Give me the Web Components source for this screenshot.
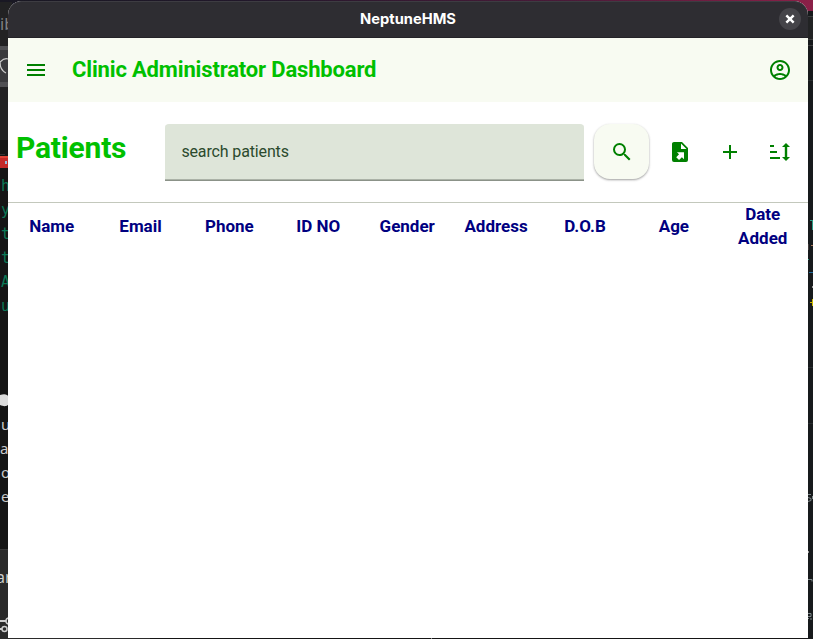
<!DOCTYPE html>
<html lang="en">
<head>
<meta charset="utf-8">
<title>NeptuneHMS</title>
<style>
html,body{margin:0;width:813px;height:639px;overflow:hidden;background:#151515}
</style>
</head>
<body>
<hms-desktop>
  <hms-window heading="NeptuneHMS">
    <hms-appbar>Clinic Administrator Dashboard</hms-appbar>
    <hms-toolbar heading="Patients" placeholder="search patients"></hms-toolbar>
    <hms-table>
      <hms-th>Name</hms-th><hms-th>Email</hms-th><hms-th>Phone</hms-th><hms-th>ID NO</hms-th><hms-th>Gender</hms-th><hms-th>Address</hms-th><hms-th>D.O.B</hms-th><hms-th>Age</hms-th><hms-th>Date Added</hms-th>
    </hms-table>
  </hms-window>
</hms-desktop>
<script>
const define = (name, html) => customElements.define(name, class extends HTMLElement {
  constructor() {
    super();
    const t = document.createElement('template');
    t.innerHTML = html;
    this.attachShadow({mode: 'open'}).append(t.content.cloneNode(true));
    this.shadowRoot.querySelectorAll('[data-attr]').forEach(e => e.textContent = this.getAttribute(e.dataset.attr));
  }
});

const icons = {
  menu: '<path d="M3 18h18v-2H3v2zm0-5h18v-2H3v2zm0-7v2h18V6H3z"/>',
  account: '<path d="M12 2C6.48 2 2 6.48 2 12s4.48 10 10 10 10-4.48 10-10S17.52 2 12 2zM7.35 18.5C8.66 17.56 10.26 17 12 17s3.34.56 4.65 1.5C15.34 19.44 13.74 20 12 20s-3.34-.56-4.65-1.5zm10.79-1.38C16.45 15.8 14.32 15 12 15s-4.45.8-6.14 2.12C4.7 15.73 4 13.95 4 12c0-4.42 3.58-8 8-8s8 3.58 8 8c0 1.95-.7 3.73-1.86 5.12zM12 6c-1.93 0-3.5 1.57-3.5 3.5S10.07 13 12 13s3.5-1.57 3.5-3.5S13.93 6 12 6zm0 5c-.83 0-1.5-.67-1.5-1.5S11.17 8 12 8s1.5.67 1.5 1.5S12.83 11 12 11z"/>',
  search: '<path d="M15.5 14h-.79l-.28-.27A6.471 6.471 0 0 0 16 9.5 6.5 6.5 0 1 0 9.5 16c1.61 0 3.09-.59 4.23-1.57l.27.28v.79l5 4.99L20.49 19l-4.99-5zm-6 0C7.01 14 5 11.99 5 9.5S7.01 5 9.5 5 14 7.01 14 9.5 11.99 14 9.5 14z"/>',
  exportfile: '<path fill-rule="evenodd" d="M6 2C4.89 2 4 2.9 4 4v16a2 2 0 0 0 2 2h12a2 2 0 0 0 2-2V8l-6-6H6zM13 3.5 18.5 9H13V3.5zM8.93 12.22H16v7.07l-2.12-2.12L11.05 20 8.22 17.17l2.83-2.83-2.12-2.12z"/>',
  plus: '<path d="M19 13h-6v6h-2v-6H5v-2h6V5h2v6h6v2z"/>',
  sort: '<path d="M19.200 7h2.800l-4-4-4 4h2.800v10h-2.800l4 4 4-4h-2.800V7M2 17h10v2H2v-2M6 5v2H2V5h4m-4 6h7v2H2v-2z"/>',
  close: '<path d="M6.500 6.500l11 11M17.500 6.500l-11 11" stroke="#fff" stroke-width="3.6" fill="none"/>'
};
customElements.define('hms-icon', class extends HTMLElement {
  constructor() {
    super();
    this.attachShadow({mode: 'open'}).innerHTML = `<style>:host{display:block;width:24px;height:24px;color:#008000}svg{display:block;width:100%;height:100%}</style><svg viewBox="0 0 24 24" fill="currentColor">${icons[this.getAttribute('name')]}</svg>`;
  }
});

define('hms-desktop', `<style>
:host{display:block;position:relative;width:813px;height:639px;overflow:hidden;background:#151515}
svg{position:absolute;inset:0}
span{position:absolute;line-height:24px;white-space:pre;font-family:"Noto Sans",sans-serif;font-size:16px;color:#ccc}
.g{font-family:"DejaVu Sans Mono",monospace;font-size:15px;color:#0a7957}
.w{font-size:15px;color:#c9c9c9}
slot{display:block;position:absolute;left:8px;top:1px}
</style>
<svg width="813" height="639">
 <defs><linearGradient id="a"><stop offset="0" stop-color="#191823"/><stop offset=".3" stop-color="#21172a"/><stop offset=".7" stop-color="#4b1a39"/><stop offset="1" stop-color="#8b2048"/></linearGradient></defs>
 <rect width="813" height="12" fill="url(#a)"/>
 <path fill="#222223" d="M0 2h12v44H0zM0 86h8v54H0z"/><path fill="#505053" d="M0 46h8v41H0z"/><path fill="#3a3a3d" d="M0 50h8v32H0z"/>
 <path d="M8 59c-3-1-5 0-8 3 0 6 2 9 6 11" fill="none" stroke="#ccc" stroke-width="1.2"/>
 <path fill="#c52a29" d="M0 156h8v12H0z"/><path fill="#e04437" d="M0 156h8v2H0z"/><path fill="#9bd" d="M5 161h2v3H5z"/>
 <path fill="#333" d="M0 154h5v1H0z"/>
 <path fill="#ddd" d="M0 395c5-2 8 0 8 1v9c-3 2-5 1-8 0z"/>
 <path fill="#2a2a2a" d="M0 549h8v90H0z"/><path fill="#383838" d="M0 549h8v1H0z"/>
 <path d="M0 621h6M0 629h2" stroke="#ccc" stroke-width="2"/><circle cx="9" cy="621" r="3" fill="none" stroke="#ccc" stroke-width="1.5"/><circle cx="4.500" cy="629" r="2.500" fill="none" stroke="#ccc" stroke-width="1.500"/>
 <path fill="#2b2b2b" d="M0 638h150v1H0z"/><path fill="#888" d="M431 638h1v1h-1z"/>
 <path fill="#171a1c" d="M808 11h5v628h-5z"/><path fill="#222324" d="M808 16h5v24h-5z"/>
 <path fill="#3c3d3e" d="M808 16h5v1h-5zM808 39h5v1h-5zM808 45h5v1h-5z"/><path fill="#292d2f" d="M808 80h5v1h-5zM808 367h5v1h-5zM808 423h5v1h-5z"/>
 <path fill="#2c9b86" d="M810 220h3v1h-3zM812 221h1v9h-1zM808 259h1v1h-1z"/><path fill="#236d9d" d="M809 272h4v1h-4z"/>
 <path fill="#aa7658" d="M811 245h2v1h-2z"/><path fill="#403a39" d="M808 244h1v6h-1z"/><path fill="#999" d="M812 286h1v2h-1zM808 551h1v2h-1z"/>
 <path fill="#cab800" d="M810 302h3v1h-3zM812 299h1v7h-1z"/>
 <path fill="none" stroke="#7f898b" d="M811 494.500h-3M808 497.500l3 1v2l-3 1M812.500 496v3M808 579.500h4v2M808 613.500h3v3h-3M811 620v-2M808 618.500h1"/>
</svg>
<span style="left:0;top:12px;color:#828285">ib</span>
<span class="g" style="left:1px;top:174px">h</span><span class="g" style="left:1px;top:198px">y</span><span class="g" style="left:1px;top:222px">t</span><span class="g" style="left:1px;top:246px">t</span><span class="g" style="left:1px;top:270px">A</span><span class="g" style="left:1px;top:294px">u</span>
<span class="w" style="left:1px;top:412px">u</span><span class="w" style="left:0;top:436px">a</span><span class="w" style="left:1px;top:460px">o</span><span class="w" style="left:1px;top:484px">e</span><span style="left:-4px;top:565px">ar</span>
<slot></slot>`);

define('hms-window', `<style>
:host{display:flex;flex-direction:column;width:800px;height:637px;background:#fff;border-radius:14px 14px 0 0;overflow:hidden}
header{display:grid;grid-template-columns:40px 1fr 40px;align-items:center;justify-items:center;height:37px;flex:none;box-sizing:border-box;background:#2e2d32;border-radius:14px 14px 0 0;box-shadow:inset 0 1px #3d3c42,inset 0 -1px #242328;color:#fff;font:700 14.700px/20px Inter,sans-serif}
h1{font:inherit;margin:-2px 0 0;grid-column:2}
button{all:unset;display:grid;place-items:center;width:22px;height:22px;border-radius:50%;background:#454449;margin:-1px 0 0 4px}
hms-icon{width:16px;height:16px}
</style><header><h1 data-attr="heading"></h1><button aria-label="Close"><hms-icon name="close"></hms-icon></button></header><slot></slot>`);

define('hms-appbar', `<style>
:host{display:flex;align-items:center;flex:none;height:64px;box-sizing:border-box;padding:0 16px;background:#f8fbf2;font:700 22px/28px Roboto,sans-serif;letter-spacing:-.16px;color:#00c000}
b{flex:1;margin-left:24px;font-weight:inherit}
</style><hms-icon name="menu"></hms-icon><b><slot></slot></b><hms-icon name="account"></hms-icon>`);

define('hms-toolbar', `<style>
:host{display:flex;align-items:center;flex:none;height:101px;box-sizing:border-box;padding-left:8px;border-bottom:1px solid #c3c8bc;font-family:Roboto,sans-serif}
h2{margin:0 0 9px;width:149.400px;font:700 30px/36px Roboto,sans-serif;letter-spacing:-.2px;color:#00c000}
.f{width:418.600px;height:57px;box-sizing:border-box;border-radius:4px 4px 0 0;background:#dee5d9;border-bottom:1px solid #8b9288;box-shadow:inset 0 -1px #abb2a7;padding-left:16px;font-size:16px;line-height:56px;letter-spacing:-.14px;color:#2b4a2d}
.s{display:grid;place-items:center;width:55px;height:55px;margin:0 0 1px 10.500px;border-radius:16px;background:#f8fbf2;box-shadow:0 1px 2px #0004,0 1px 3px #0002}
nav{display:flex;gap:26px;margin-left:18.500px}
</style><h2 data-attr="heading"></h2><div class="f" data-attr="placeholder"></div><div class="s"><hms-icon name="search"></hms-icon></div><nav><hms-icon name="exportfile"></hms-icon><hms-icon name="plus"></hms-icon><hms-icon name="sort"></hms-icon></nav>`);

define('hms-table', `<style>
:host{display:grid;grid-template-columns:repeat(9,minmax(0,1fr));height:48px;flex:none;margin:-1px .8px 0 -.800px}
</style><slot></slot>`);
define('hms-th', `<style>
:host{display:grid;place-items:center;text-align:center;font:700 17px/24px Roboto,sans-serif;color:#000080}
span{width:min-content;white-space:normal}
:host(:nth-child(4)) span{white-space:nowrap}
</style><span><slot></slot></span>`);
</script>
</body>
</html>
